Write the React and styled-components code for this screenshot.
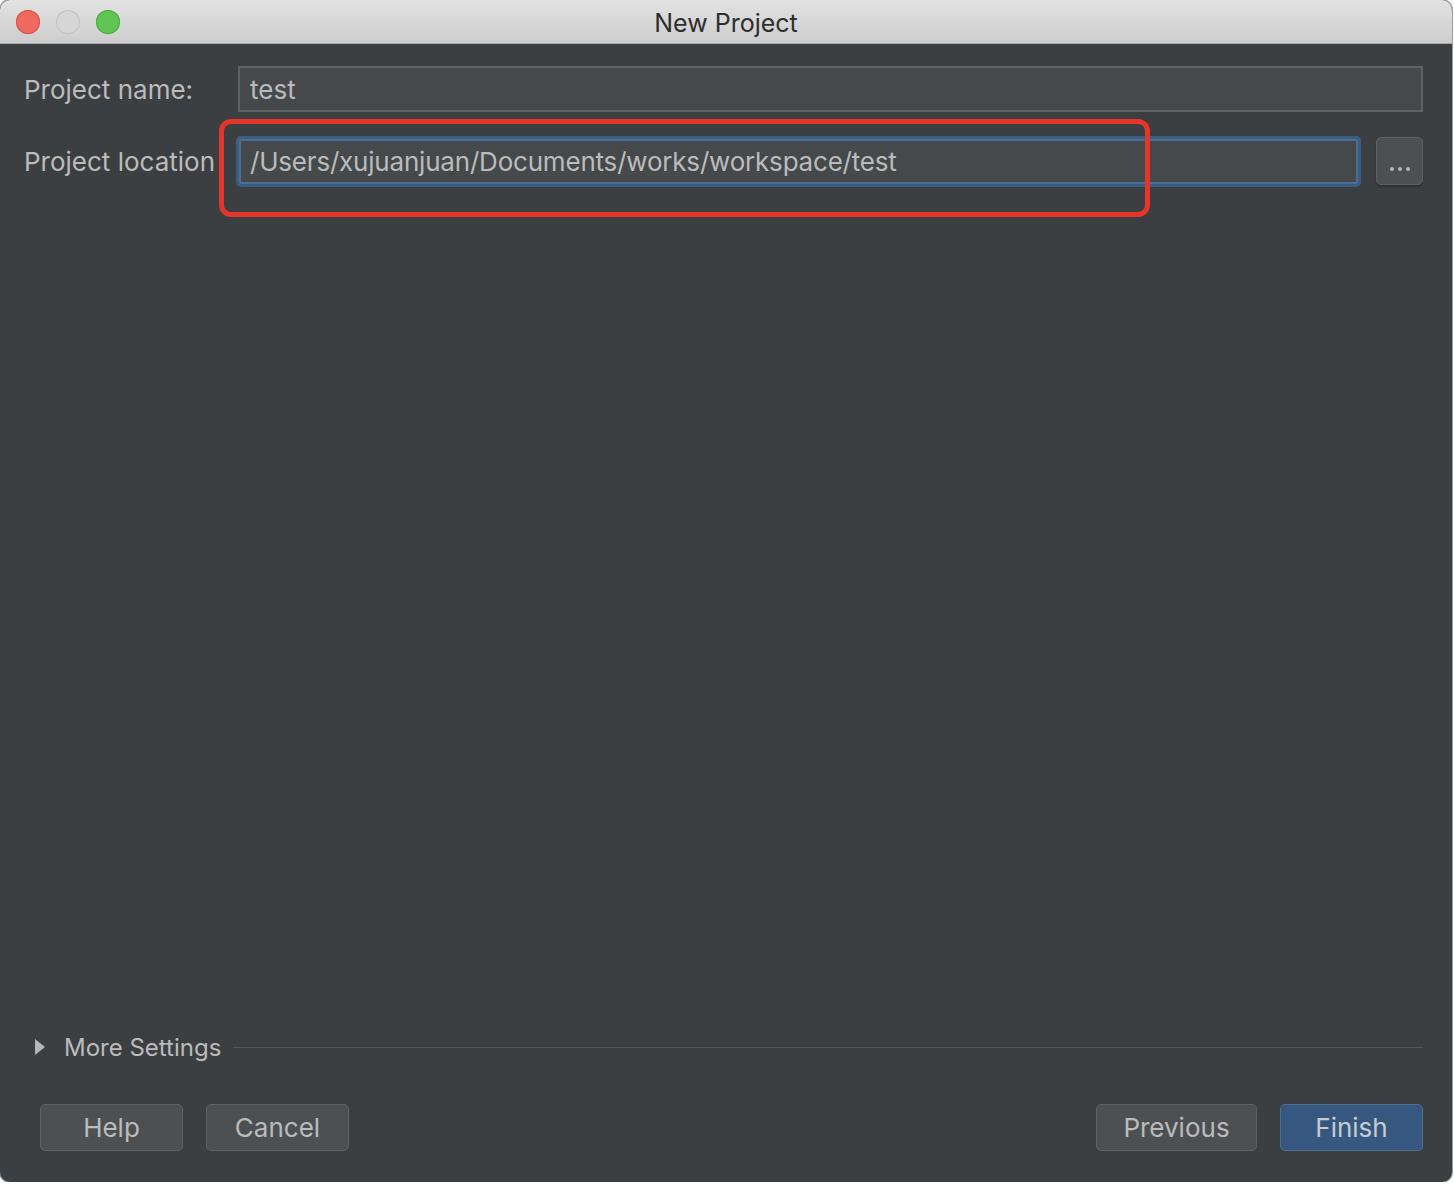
import React from "react";
import styled, { createGlobalStyle } from "styled-components";

const Global = createGlobalStyle`
  html, body { margin: 0; padding: 0; background: #ffffff; }
  body { font-family: Inter, "Liberation Sans", Arial, sans-serif; }
  * { box-sizing: border-box; }
`;

const Window = styled.div`
  width: 1452px;
  height: 1182px;
  border-radius: 10px;
  overflow: hidden;
  display: flex;
  flex-direction: column;
  background: #3c3f41;
  box-shadow: 0 0 0 1px #9a9a9a;
`;

const TitleBar = styled.div`
  position: relative;
  height: 44px;
  flex: none;
  display: flex;
  align-items: center;
  justify-content: center;
  background: linear-gradient(#e2e2e2, #cdcdcd);
  border-bottom: 1px solid #a9a9a9;
`;

const Lights = styled.div`
  position: absolute;
  left: 16px;
  top: 10px;
  display: flex;
  gap: 16px;
`;

const Light = styled.span`
  width: 24px;
  height: 24px;
  border-radius: 50%;
  background: ${(p) => p.$c};
  box-shadow: inset 0 0 0 1px ${(p) => p.$b};
`;

const Title = styled.div`
  font-size: 25px;
  color: #2e2e2e;
  padding-top: 2px;
`;

const Body = styled.div`
  position: relative;
  flex: 1;
  display: flex;
  flex-direction: column;
  padding: 22px 29px 31px 24px;
`;

const Form = styled.div`
  display: grid;
  grid-template-columns: 214px 1fr;
  row-gap: 25px;
  align-items: center;
`;

const Label = styled.div`
  font-size: 26px;
  color: #bbbbbb;
  white-space: nowrap;
`;

const NameField = styled.div`
  height: 46px;
  border: 2px solid #5f6263;
  background: #45494a;
  display: flex;
  align-items: center;
  padding-left: 10px;
  font-size: 26px;
  color: #bbbbbb;
`;

const LocationRow = styled.div`
  display: flex;
  align-items: center;
  gap: 18px;
  padding-left: 1px;
`;

const FocusedField = styled.div`
  flex: 1;
  height: 45px;
  background: #45494a;
  border: 2px solid #4a6e96;
  box-shadow: 0 0 0 3px #3b5d82;
  border-radius: 2px;
  display: flex;
  align-items: center;
  padding-left: 9px;
  font-size: 26px;
  letter-spacing: -0.2px;
  color: #bbbbbb;
`;

const BrowseButton = styled.div`
  width: 47px;
  height: 48px;
  border-radius: 5px;
  background: #4c5052;
  border: 1.5px solid #5e6163;
  box-shadow: 0 2px 2px rgba(0, 0, 0, 0.25);
  display: flex;
  align-items: center;
  justify-content: center;
  gap: 4px;
  padding-top: 16px;
`;

const Dot = styled.span`
  width: 4px;
  height: 4px;
  border-radius: 50%;
  background: #b5b5b5;
`;

const Highlight = styled.div`
  position: absolute;
  left: 219px;
  top: 75px;
  width: 931px;
  height: 98px;
  border: 5px solid #e5352a;
  border-radius: 12px;
  pointer-events: none;
`;

const Spacer = styled.div`
  flex: 1;
`;

const MoreSettings = styled.div`
  display: flex;
  align-items: center;
  padding-left: 11px;
  height: 30px;
`;

const Triangle = styled.span`
  width: 0;
  height: 0;
  border-top: 8.5px solid transparent;
  border-bottom: 8.5px solid transparent;
  border-left: 10px solid #b4b6b8;
  margin-right: 19px;
`;

const MoreText = styled.span`
  font-size: 24px;
  color: #bbbbbb;
  margin-right: 12px;
`;

const Line = styled.span`
  flex: 1;
  height: 1px;
  background: #535658;
`;

const Footer = styled.div`
  display: flex;
  align-items: center;
  gap: 23px;
  padding-left: 16px;
  margin-top: 42px;
`;

const Button = styled.div`
  width: ${(p) => p.$w || 143}px;
  height: 47px;
  border-radius: 5px;
  background: ${(p) => (p.$primary ? "#365880" : "#4c5052")};
  border: 1.5px solid ${(p) => (p.$primary ? "#4c708c" : "#5e6163")};
  display: flex;
  align-items: center;
  justify-content: center;
  font-size: 26px;
  color: ${(p) => (p.$primary ? "#c6cbd0" : "#bbbbbb")};
`;

const Grow = styled.div`
  flex: 1;
`;

export default function App() {
  return (
    <>
      <Global />
      <Window>
        <TitleBar>
          <Lights>
            <Light $c="#ee6a5e" $b="#d65145" />
            <Light $c="#d6d6d6" $b="#c2c2c2" />
            <Light $c="#60c553" $b="#4ca83f" />
          </Lights>
          <Title>New Project</Title>
        </TitleBar>
        <Body>
          <Form>
            <Label>Project name:</Label>
            <NameField>test</NameField>
            <Label>Project location</Label>
            <LocationRow>
              <FocusedField>/Users/xujuanjuan/Documents/works/workspace/test</FocusedField>
              <BrowseButton>
                <Dot />
                <Dot />
                <Dot />
              </BrowseButton>
            </LocationRow>
          </Form>
          <Highlight />
          <Spacer />
          <MoreSettings>
            <Triangle />
            <MoreText>More Settings</MoreText>
            <Line />
          </MoreSettings>
          <Footer>
            <Button>Help</Button>
            <Button>Cancel</Button>
            <Grow />
            <Button $w={161}>Previous</Button>
            <Button $primary>Finish</Button>
          </Footer>
        </Body>
      </Window>
    </>
  );
}
